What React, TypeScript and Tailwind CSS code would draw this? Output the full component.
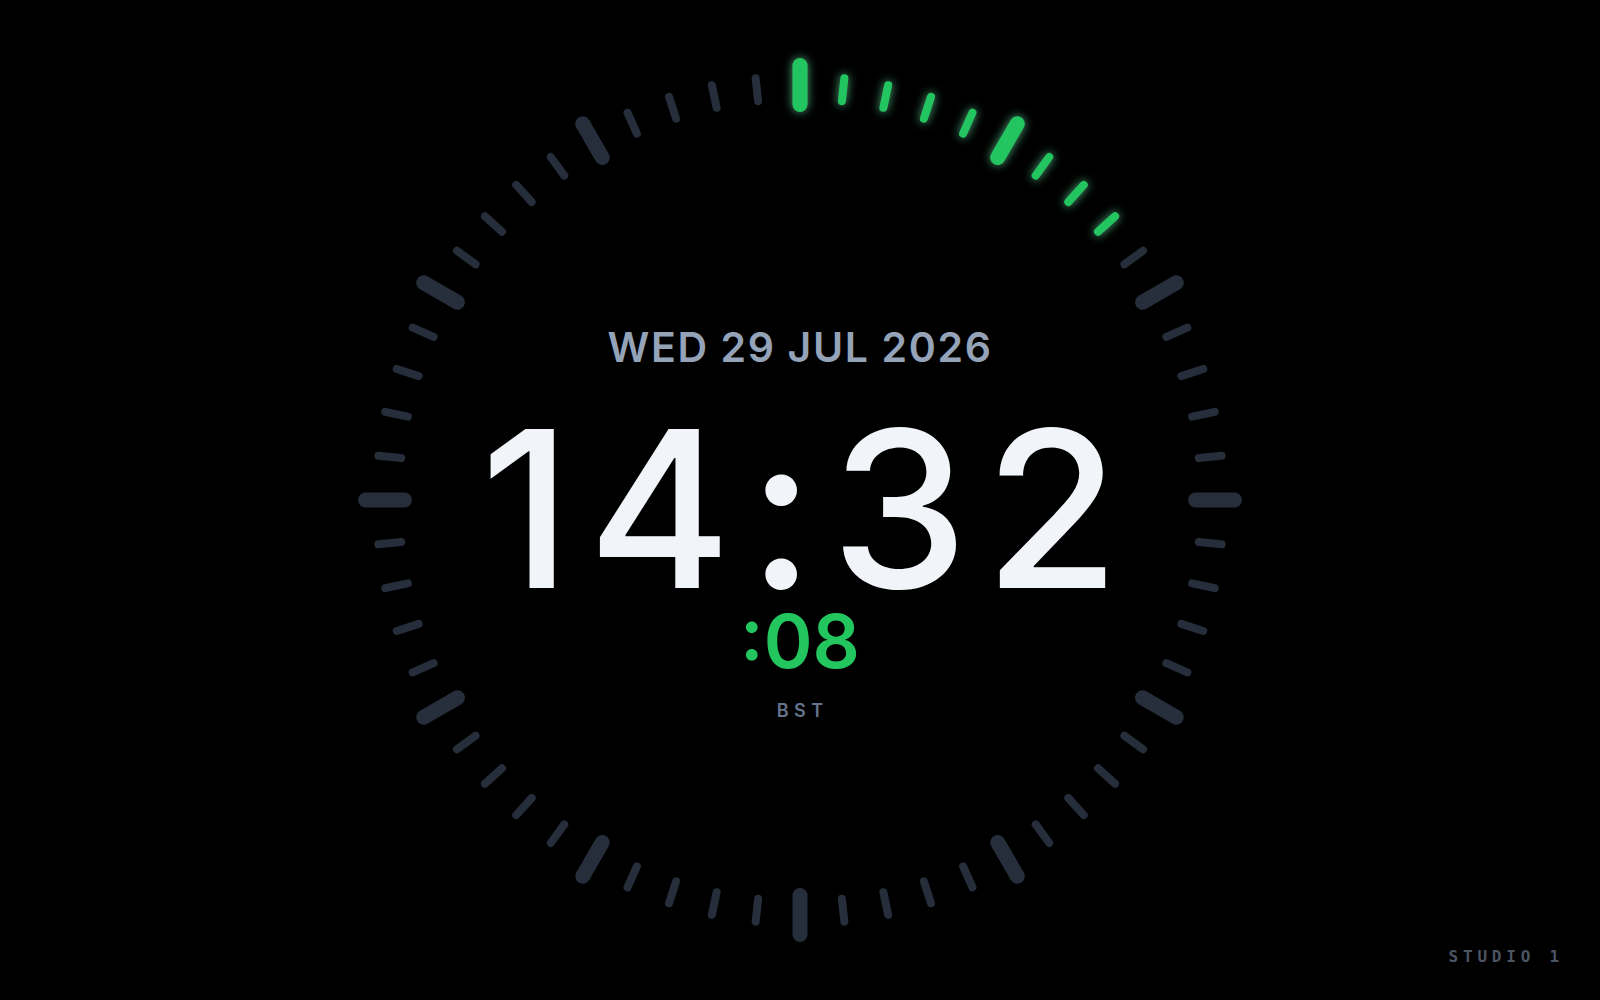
const CX = 450;
const CY = 450;
const SECONDS = 8;

function Tick({ i }: { i: number }) {
  const major = i % 5 === 0;
  const width = major ? 15 : 8;
  const outer = (major ? 442 : 428) - width / 2;
  const inner = (major ? 388 : 397) + width / 2;
  const a = (i * 6 * Math.PI) / 180;
  const sx = Math.sin(a);
  const cy = -Math.cos(a);
  const active = i <= SECONDS;
  return (
    <line
      x1={CX + sx * inner}
      y1={CY + cy * inner}
      x2={CX + sx * outer}
      y2={CY + cy * outer}
      stroke={active ? '#22c55e' : '#262e3b'}
      strokeWidth={width}
      strokeLinecap="round"
      filter={active ? 'url(#glow)' : undefined}
    />
  );
}

function Ring() {
  return (
    <svg width={900} height={900} viewBox="0 0 900 900" className="block">
      <defs>
        <filter id="glow" filterUnits="userSpaceOnUse" x="0" y="0" width="900" height="900">
          <feGaussianBlur in="SourceGraphic" stdDeviation="5" result="b" />
          <feColorMatrix in="b" type="matrix" values="0 0 0 0 0.13  0 0 0 0 0.77  0 0 0 0 0.37  0 0 0 0.75 0" />
          <feMerge>
            <feMergeNode />
            <feMergeNode in="SourceGraphic" />
          </feMerge>
        </filter>
      </defs>
      {Array.from({ length: 60 }, (_, i) => (
        <Tick key={i} i={i} />
      ))}
    </svg>
  );
}

export default function App() {
  return (
    <div className="w-[1600px] h-[1000px] bg-black flex flex-col items-center font-['Inter',sans-serif] relative overflow-hidden">
      <div className="relative w-[900px] h-[900px] mt-[50px]">
        <Ring />
        <div className="absolute inset-0 flex flex-col items-center pt-[277px]">
          <div className="text-[41px] leading-none font-semibold tracking-[0.04em] text-[#94a3b8]">
            WED 29 JUL 2026
          </div>
          <div className="text-[219px] leading-none font-medium tracking-[0.075em] pl-[0.075em] text-[#f1f5f9] mt-[31px]">
            14:32
          </div>
          <div className="text-[74px] leading-none font-semibold text-[#22c55e] -mt-[14px]">
            :08
          </div>
          <div className="text-[18px] leading-none font-semibold tracking-[0.3em] text-[#64748b] mt-[24px] pl-[0.3em]">
            BST
          </div>
        </div>
      </div>
      <div className="absolute right-[36px] bottom-[31px] font-['DejaVu_Sans_Mono',monospace] text-[16px] font-semibold tracking-[0.3em] text-[#4b5563]">
        STUDIO 1
      </div>
    </div>
  );
}
